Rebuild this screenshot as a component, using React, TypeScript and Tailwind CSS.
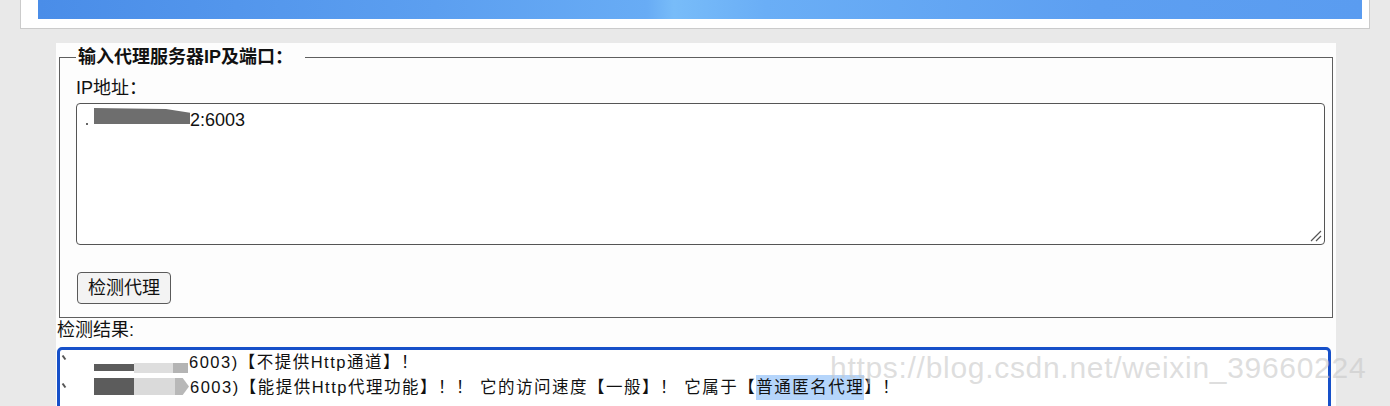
const ResizeGrip = () => (
  <svg width="13" height="13" viewBox="0 0 13 13" className="absolute right-[2px] bottom-[2px]">
    <path d="M12 2 L2 12 M12 7 L7 12" stroke="#555" strokeWidth="1.2" fill="none" />
  </svg>
);

const Tick = ({ top }: { top: string }) => (
  <span className={`inline-block w-[2px] h-[5px] bg-[#555] rotate-[-35deg] ${top}`} />
);

const App = () => {
  return (
    <div className="relative w-[1390px] h-[406px] overflow-hidden bg-[#e9e9e9] text-[#111] font-['Liberation_Sans','Noto_Sans_CJK_SC',sans-serif]">
      {/* top banner */}
      <div className="mx-[20px] h-[29px] bg-white border-x border-b border-[#cbcbcb] pl-[17px] pr-[7px]">
        <div className="h-[19px] bg-[linear-gradient(to_right,#4a8de8_0%,#5c9ff0_30%,#68acf5_46%,#78bcf9_48%,#6aaef6_55%,#5d9ff1_80%,#5a9cf0_100%)]" />
      </div>

      {/* main panel */}
      <div className="ml-[56px] mt-[14px] w-[1280px] h-[400px] bg-[#fdfdfd] pt-[3px]">
        <fieldset className="mx-[3px] border border-[#5f5f5f] pl-[16px] pr-[7px] pt-[9px] pb-[13px]">
          <legend className="pl-[2px] pr-[12px] text-[18px] leading-[22px] font-bold">输入代理服务器IP及端口：</legend>
          <div className="text-[18px] leading-[22px]">IP地址：</div>
          <div className="relative mt-[4px] h-[142px] border border-[#555] rounded-[4px] bg-white">
            <div className="flex items-start pl-[9px]">
              <span className="inline-block w-[2px] h-[2px] mt-[19px] bg-[#666]" />
              <span className="inline-block ml-[6px] mt-[4px] w-[96px] h-[16px] bg-[#6e6e6e] [clip-path:polygon(0_0,75%_6%,100%_30%,100%_100%,0_100%)]" />
              <span className="mt-[6px] text-[18px] leading-[21px]">2:6003</span>
            </div>
            <ResizeGrip />
          </div>
          <div className="mt-[27px]">
            <button className="ml-[1px] h-[32px] px-[10px] bg-[#f3f3f3] border border-[#5a5a5a] rounded-[4px] text-[18px] leading-none text-[#111]">
              检测代理
            </button>
          </div>
        </fieldset>

        <div className="mt-[1px] ml-[1px] text-[18px] leading-[22px]">检测结果:</div>

        <div className="mt-[6px] ml-[1px] w-[1274px] h-[80px] border-[3px] border-[#1650c9] rounded-[5px] bg-white px-[3px] text-[16.5px] tracking-[1.5px]">
          <div className="flex items-start h-[25px]">
            <Tick top="mt-[5px]" />
            <span className="ml-[29px] mt-[14px] w-[40px] h-[7px] bg-[#5c5c5c]" />
            <span className="mt-[13px] w-[39px] h-[10px] bg-[#dedede]" />
            <span className="mt-[13px] w-[15px] h-[10px] bg-[#b4b4b4]" />
            <span className="ml-[1px] leading-[25px] whitespace-pre">6003)【不提供Http通道】！</span>
          </div>
          <div className="flex items-start h-[25px]">
            <Tick top="mt-[8px]" />
            <span className="ml-[29px] mt-[3px] w-[40px] h-[17px] bg-[#5c5c5c]" />
            <span className="mt-[3px] w-[41px] h-[17px] bg-[#dadada]" />
            <span className="mt-[3px] w-[14px] h-[17px] bg-[#b8b8b8] [clip-path:polygon(0_0,55%_0,100%_50%,55%_100%,0_100%)]" />
            <span className="ml-[1px] leading-[25px] whitespace-pre">
              6003)【能提供Http代理功能】！！ 它的访问速度【一般】！ 它属于【
              <span className="inline-block h-[25px] bg-[#b5d5fb]">普通匿名代理</span>
              】！
            </span>
          </div>
        </div>
      </div>

      {/* watermark */}
      <div className="absolute left-[830px] top-[353px] text-[30px] leading-[30px] tracking-[0.7px] text-[rgba(200,200,200,0.6)] whitespace-nowrap pointer-events-none">
        https://blog.csdn.net/weixin_39660224
      </div>
    </div>
  );
};

export default App;
